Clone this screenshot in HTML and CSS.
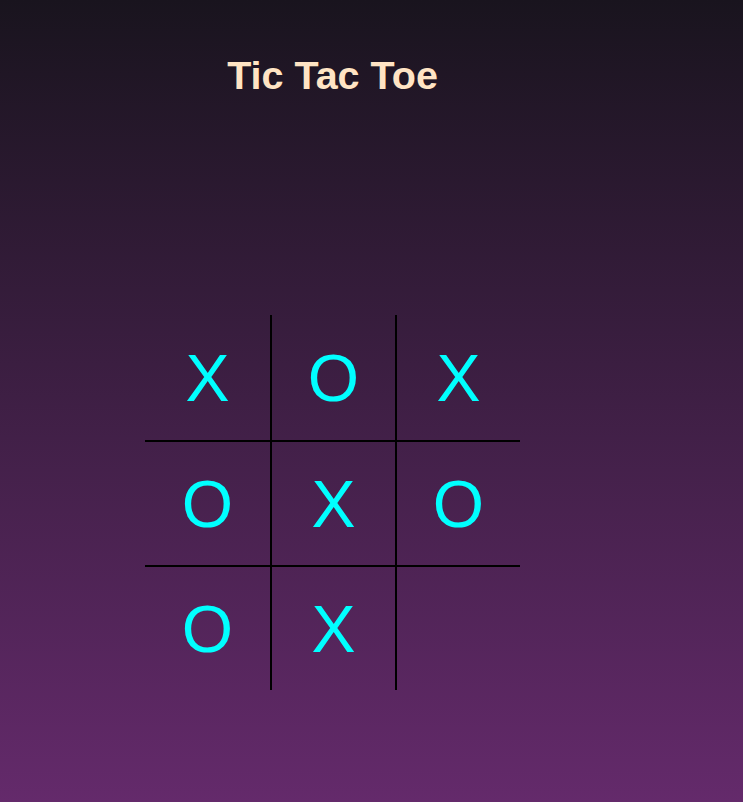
FILE: index.html
```html
<!DOCTYPE html>
<html lang="en">
<head>
<meta charset="utf-8">
<title>Tic Tac Toe</title>
<link rel="stylesheet" href="styles.css">
</head>
<body>
<main class="game">
  <h1 class="title">Tic Tac Toe</h1>
  <div class="board">
    <div class="cell">X</div>
    <div class="cell col">O</div>
    <div class="cell col">X</div>
    <div class="cell row">O</div>
    <div class="cell row col">X</div>
    <div class="cell row col">O</div>
    <div class="cell row">O</div>
    <div class="cell row col">X</div>
    <div class="cell row col"></div>
  </div>
</main>
</body>
</html>
```
FILE: styles.css
```css
html, body {
  margin: 0;
  padding: 0;
}
body {
  min-height: 802px;
  background: linear-gradient(to bottom, #19141e 0%, #642a6b 100%);
  font-family: "Liberation Sans", Arial, sans-serif;
}
.game {
  width: 375px;
  padding: 53px 0 0 145px;
  display: flex;
  flex-direction: column;
}
.title {
  margin: 0;
  font-size: 39.5px;
  font-weight: bold;
  color: #ffe4c4;
  text-align: center;
}
.board {
  margin-top: 217px;
  display: grid;
  grid-template-columns: repeat(3, 125px);
  grid-template-rows: repeat(3, 125px);
}
.cell {
  box-sizing: border-box;
  display: flex;
  align-items: center;
  justify-content: center;
  font-size: 66px;
  color: #00ffff;
}
.cell.col {
  border-left: 2px solid #000;
}
.cell.row {
  border-top: 2px solid #000;
}
```
